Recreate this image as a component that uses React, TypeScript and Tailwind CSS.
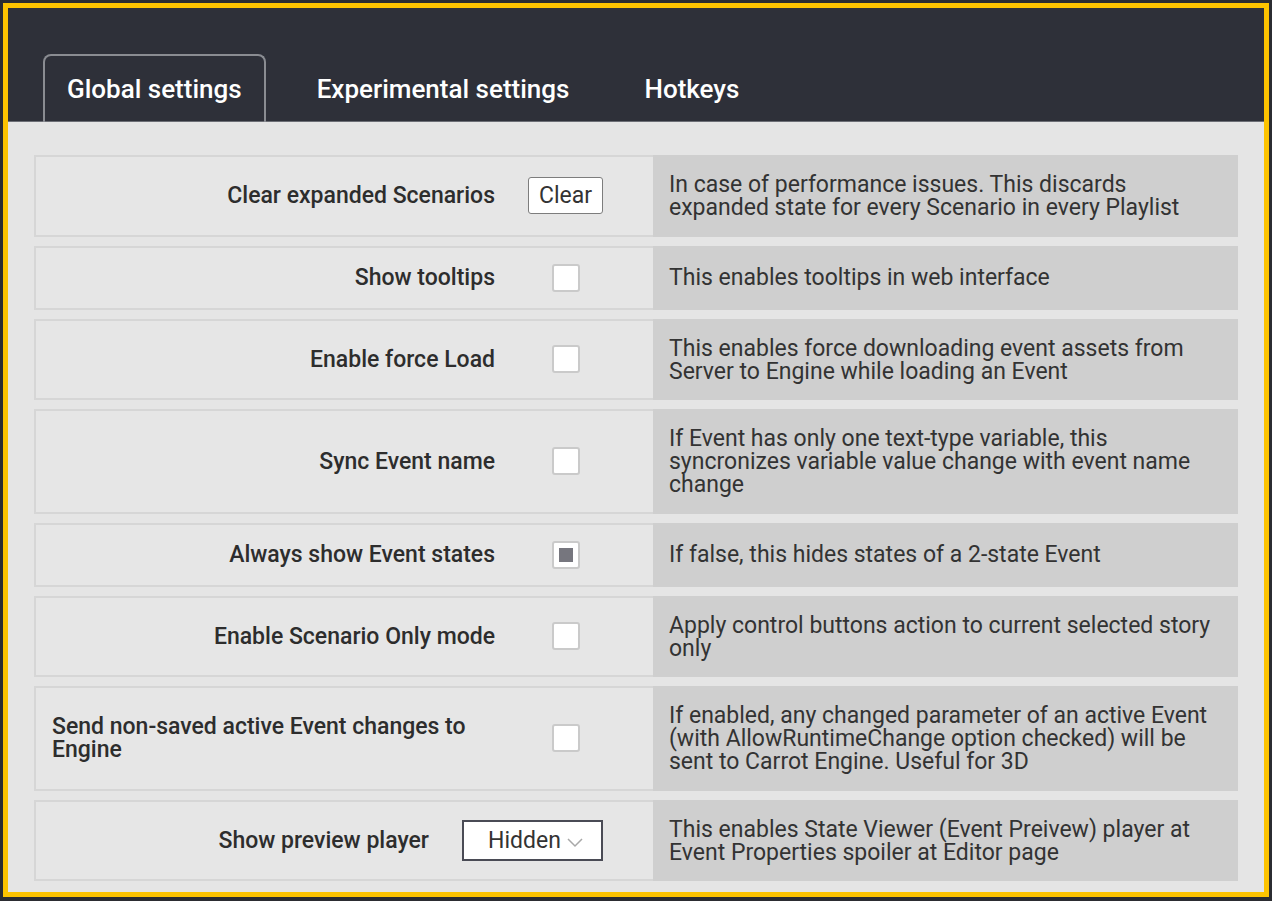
import React from "react";

type Ctrl = { kind: "button" } | { kind: "check"; checked?: boolean } | { kind: "select" };

const rows: { label: string; ctrl: Ctrl; desc: string }[] = [
  { label: "Clear expanded Scenarios", ctrl: { kind: "button" }, desc: "In case of performance issues. This discards expanded state for every Scenario in every Playlist" },
  { label: "Show tooltips", ctrl: { kind: "check" }, desc: "This enables tooltips in web interface" },
  { label: "Enable force Load", ctrl: { kind: "check" }, desc: "This enables force downloading event assets from Server to Engine while loading an Event" },
  { label: "Sync Event name", ctrl: { kind: "check" }, desc: "If Event has only one text-type variable, this syncronizes variable value change with event name change" },
  { label: "Always show Event states", ctrl: { kind: "check", checked: true }, desc: "If false, this hides states of a 2-state Event" },
  { label: "Enable Scenario Only mode", ctrl: { kind: "check" }, desc: "Apply control buttons action to current selected story only" },
  { label: "Send non-saved active Event changes to Engine", ctrl: { kind: "check" }, desc: "If enabled, any changed parameter of an active Event (with AllowRuntimeChange option checked) will be sent to Carrot Engine. Useful for 3D" },
  { label: "Show preview player", ctrl: { kind: "select" }, desc: "This enables State Viewer (Event Preivew) player at Event Properties spoiler at Editor page" },
];

function Control({ c }: { c: Ctrl }) {
  if (c.kind === "button") {
    return (
      <div className="w-[75px] h-[37px] bg-white border border-[#7d7d7d] rounded-[3px] flex items-center justify-center text-[23px] leading-[23px] text-[#333]">
        Clear
      </div>
    );
  }
  if (c.kind === "select") {
    return (
      <div className="w-[141px] h-[41px] bg-white border-2 border-[#4a4b55] flex items-center pl-[24px] text-[23px] leading-[23px] text-[#333]">
        <span>Hidden</span>
        <svg width="16" height="10" viewBox="0 0 16 10" className="ml-[6px] mt-[5px]">
          <path d="M1 1 L8 8 L15 1" fill="none" stroke="#a8a8a8" strokeWidth="1.5" />
        </svg>
      </div>
    );
  }
  return (
    <div className="w-[28px] h-[28px] bg-white border-2 border-[#cacaca] rounded-[3px] flex items-center justify-center">
      {c.checked ? <div className="w-[14px] h-[14px] bg-[#76767e]" /> : null}
    </div>
  );
}

export default function App() {
  return (
    <div
      className="w-[1272px] h-[901px] bg-[#2b2c31] pt-[3px] pb-[4px] pl-[3px] pr-[3px]"
      style={{ fontFamily: "Roboto, 'Noto Sans', sans-serif" }}
    >
      <div className="h-full border-[5px] border-[#fdc300] flex flex-col">
        <div className="h-[114px] shrink-0 bg-[#2e3039] flex items-end pl-[35px] gap-[27px] border-b border-[#6c6e75]">
          <div className="h-[68px] -mb-px px-[22px] border-2 border-b-0 border-[#8a8c92] rounded-t-[8px] flex items-center text-white text-[26px] font-medium">
            Global settings
          </div>
          <div className="h-[68px] -mb-px px-[22px] border-2 border-b-0 border-transparent flex items-center text-white text-[26px] font-medium">
            Experimental settings
          </div>
          <div className="h-[68px] -mb-px px-[22px] border-2 border-b-0 border-transparent flex items-center text-white text-[26px] font-medium">
            Hotkeys
          </div>
        </div>
        <div className="flex-1 bg-[#e5e5e5] px-[26px] pt-[33px] flex flex-col gap-[9px]">
          {rows.map((r, i) => (
            <div key={i} className="flex min-h-[64px]">
              <div className="w-[619px] bg-[#e6e6e6] border-2 border-r-0 border-[#d6d6d6] flex items-center justify-end pl-[16px] pr-[50px]">
                <div className="text-left text-[23px] leading-[23px] font-medium text-[#2d2d2d]">{r.label}</div>
                <div className="ml-[33px] min-w-[75px] flex justify-center shrink-0">
                  <Control c={r.ctrl} />
                </div>
              </div>
              <div className="flex-1 bg-[#cfcfcf] pl-[16px] pr-[16px] pt-[18px] pb-[17.5px] flex items-center text-[23px] leading-[23px] text-[#333]">
                <div>{r.desc}</div>
              </div>
            </div>
          ))}
        </div>
      </div>
    </div>
  );
}
